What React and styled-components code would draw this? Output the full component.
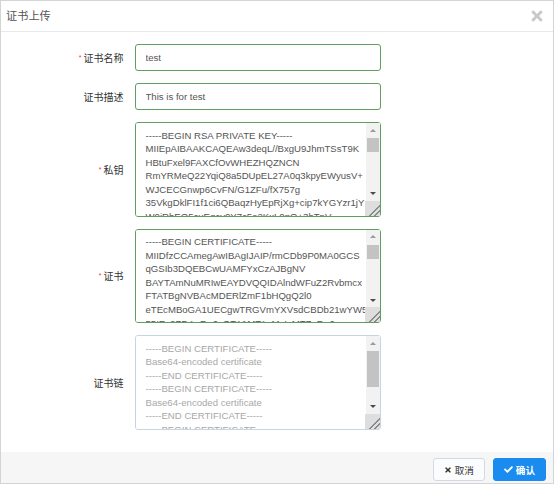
import styled, { createGlobalStyle } from 'styled-components'
import { FaTimes, FaCheck } from 'react-icons/fa'

const GlobalStyle = createGlobalStyle`
  html, body { margin: 0; padding: 0; background: #fff; }
  body { font-family: "Liberation Sans", Arial, "Noto Sans CJK SC", sans-serif; }
  * { box-sizing: border-box; }
`

const Dialog = styled.div`
  width: 554px;
  height: 484px;
  border: 1px solid #d4d4d4;
  display: flex;
  flex-direction: column;
  background: #fff;
`

const Header = styled.div`
  height: 31px;
  flex: none;
  border-bottom: 1px solid #e6e9f0;
  display: flex;
  align-items: center;
  justify-content: space-between;
  padding: 0 8px 2px 5px;
`

const Title = styled.div`
  font-family: "Noto Sans CJK SC", sans-serif;
  font-size: 11.2px;
  color: #555;
`

const Close = styled.span`
  display: flex;
  color: #c8c8c8;
  font-size: 16px;
  margin-top: 1px;
`

const Body = styled.div`
  flex: 1;
  padding-top: 12px;
`

const Row = styled.div`
  display: grid;
  grid-template-columns: 133.5px 246px;
  align-items: center;
  margin-bottom: 12px;
`

const Label = styled.label`
  text-align: right;
  padding-right: 11px;
  font-family: "Noto Sans CJK SC", sans-serif;
  font-size: 10px;
  color: #333;
`

const Star = styled.span`
  color: #e5403a;
  font-family: "Liberation Sans", sans-serif;
  font-size: 7px;
  margin-right: 2px;
  position: relative;
  top: -2px;
`

const Input = styled.input`
  height: 27px;
  width: 100%;
  border: 1px solid ${p => (p.$ok ? '#5f9e5f' : '#c8d4e0')};
  border-radius: 3px;
  padding: 0 10px;
  font-family: "Liberation Sans", Arial, sans-serif;
  font-size: 9.6px;
  color: #555;
  outline: none;
`

const AreaWrap = styled.div`
  position: relative;
`

const Area = styled.textarea`
  height: 94.5px;
  width: 100%;
  border: 1px solid ${p => (p.$ok ? '#5f9e5f' : '#c8d4e0')};
  border-radius: 3px;
  padding: 5.5px 10px;
  font-family: "Liberation Sans", Arial, sans-serif;
  font-size: 9.6px;
  line-height: 13.6px;
  color: ${p => (p.$muted ? '#a8a8a8' : '#555')};
  white-space: pre;
  overflow-x: hidden;
  overflow-y: scroll;
  outline: none;
  display: block;

  &::-webkit-resizer {
    background-color: #dedede;
    background-image: linear-gradient(135deg, transparent 0 62%, #8a8a8a 62% 67%, transparent 67% 80%, #8a8a8a 80% 85%, transparent 85%);
  }
`

/* drawn scrollbar, laid over the textarea's right edge */
const Scrollbar = styled.div`
  position: absolute;
  top: 1px;
  right: 1px;
  bottom: 16px;
  width: 14px;
  background: #f2f2f2;
  display: flex;
  flex-direction: column;
  pointer-events: none;
`

const ArrowBtn = styled.div`
  height: 14px;
  flex: none;
  display: flex;
  align-items: center;
  justify-content: center;

  &::before {
    content: '';
    border-left: 3px solid transparent;
    border-right: 3px solid transparent;
    ${p => (p.$down
      ? 'border-top: 3px solid #4a4a4a;'
      : 'border-bottom: 3px solid #9a9a9a;')}
  }
`

const Track = styled.div`
  flex: 1;
  padding: 0 1px;
`

const Thumb = styled.div`
  height: ${p => p.$size}px;
  margin-top: 1px;
  background: #c3c3c3;
`

const Footer = styled.div`
  height: 31px;
  flex: none;
  background: #f6f6f6;
  display: flex;
  justify-content: flex-end;
  align-items: flex-start;
  gap: 8px;
  padding: 6px 7px 0 0;
`

const Button = styled.button`
  height: 23px;
  display: flex;
  align-items: center;
  gap: 3px;
  padding: 0 10px;
  border-radius: 3px;
  border: 1px solid ${p => (p.$primary ? '#1a8cf0' : '#d3dae3')};
  background: ${p => (p.$primary ? '#1a8cf0' : '#fbfcfd')};
  color: ${p => (p.$primary ? '#fff' : '#333')};
  font-family: "Noto Sans CJK SC", sans-serif;
  font-size: 9.6px;
  font-weight: ${p => (p.$primary ? 700 : 400)};
  cursor: pointer;
  svg { font-size: ${p => (p.$primary ? '9px' : '8px')}; }
`

const privateKey = [
  '-----BEGIN RSA PRIVATE KEY-----',
  'MIIEpAIBAAKCAQEAw3deqL//BxgU9JhmTSsT9K',
  'HBtuFxel9FAXCfOvWHEZHQZNCN',
  'RmYRMeQ22YqiQ8a5DUpEL27A0q3kpyEWyusV+',
  'WJCECGnwp6CvFN/G1ZFu/fX757g',
  '35VkgDklFI1f1ci6QBaqzHyEpRjXg+cip7kYGYzr1jY',
  'W0iRbEQ5cuEgcy0Y7c5a2KxL0pQ+3hTnV',
  'c8XkFq2n0JtBvL7s4QxYw9ZpR1mHd6eA',
  'Kp3Uu0WlB8sZr2fTq6YhNcE5vMj7OaD1',
  'gH4kLs9Pe2QwRt/XyZ1uVb8nMc3Ji0Ao',
  'Tf6RkWq+Ys2Hp9LdG4vBn7Ux1Ce5Zm3E',
  'jN8aQr0Sk2Lh6Vt/Wp4Dy9Fb1Mx7Gc3K',
  'oP5uYi2Rn8Ht0Le6Sa4Zq9Xw1Vd3Bf7M',
  'Qs2Kc8Jh0Dn6Ym4Tp9Ga1Lx3Rb7We5Fu',
  'Uz4Ov2Nk8Ic0Hj6Pq4Ms9Ea1Ty3Wl7Dg',
  'Bi5Xf2Jo8Rm0Sd6Ku4Lc9Qn1Zh3Yp7Ve',
  'Ga2Tw8Lb0Mk6Hs4Jr9Cx1Py3Nf7Qd5Uo',
  'Ke4Ri2Ws8Dn0Vb6Zl4Gt9Oh1Mc3Xj7Ap',
  'Fy5Lm2Uq8Ek0Pi6Nr4Sd9Bw1Hx3Tc7Zo',
  'Jv4Ob2Ya8Gn0Rk6Ct4Ml9Ws1Ex3Pd7Lu',
  'Hq5Ni2Zf8Sb0Kj6Xo4Ar9Tv1Dm3Yc7Ge',
  'Wp2Mh8Cl0Ux6Es4Pn9Jd1Rb3Fk7Lt5Qz',
  'Oa4Vg2Ki8Ty0Nw6Hb4Sc9Zm1Lq3Xe7Dr',
  'Bs5Jf2Po8Gu0Mk6Rd4Yl9Cn1Wh3Ex7Ta',
  'Iz2Qv8Hc0Fp6Ob4Nj9Ks1Ug3Lr7Ym5Dw',
  'Ex4Tl2Sa8Jm0Cq6Zk4Vo9Hb1Pn3Rg7Fy',
  'Lc5Wu2Dr8Ys0Ni6Gf4Ot9Mx1Aj3Kp7Be',
  'Rq2Hv8Pk0Ua6Jb4Cw9Ll1Zs3Tn7Xd5Go',
  'Mf4Ye2Ni8Sx0Kc6Ot4Br9Dp1Ql3Vh7Ju',
  'Wa5Fm2Lj8Cg0Ry6Uk4Hs9Pb1Nd3Eo7Zt',
  '-----END RSA PRIVATE KEY-----',
].join('\n')

const certificate = [
  '-----BEGIN CERTIFICATE-----',
  'MIIDfzCCAmegAwIBAgIJAIP/rmCDb9P0MA0GCS',
  'qGSIb3DQEBCwUAMFYxCzAJBgNV',
  'BAYTAmNuMRIwEAYDVQQIDAlndWFuZ2Rvbmcx',
  'FTATBgNVBAcMDERlZmF1bHQgQ2l0',
  'eTEcMBoGA1UECgwTRGVmYXVsdCBDb21wYW55',
  '55IEx0ZDAeFw0xOTA1MTAxMzIxMTZaFw0y',
  'OTA1MDcxMzIxMTZaMFYxCzAJBgNVBAYT',
  'AmNuMRIwEAYDVQQIDAlndWFuZ2RvbmcxFTAT',
  'BgNVBAcMDERlZmF1bHQgQ2l0eTEcMBoG',
  'A1UECgwTRGVmYXVsdCBDb21wYW55IEx0ZDCC',
  'ASIwDQYJKoZIhvcNAQEBBQADggEPADCCAQoC',
  'ggEBAMN3XqjL/wcYFPSYZk0rE/SnhwbbhcXp',
  'fRRQlwnzr1hxGR0GTQ0ZmmETHkNtmKokPGuQ',
  '1KRC9uwNKt5KchFsrlfliQhAhp8KegrxTfxt',
  'WRbv13++YN+VZIA5JRSNX9XIukAWqsx8hKUY',
  'l4PnIqe5GBmM69Y1tIkWxEOXLhIHMtGO3Oa',
  'YnDXsPz+ITvQtNcD4Ysp5CqTf8Pz1kBvLqR',
  'Hn4ZxU9a2mKq7tWc0bFe3jLrV6oYs1dGp8N',
  'Xi5Tb2Mw8Qk0Hj6Rz4Ua9Lc1Pf3Vn7Eo5Gy',
  'Ks2Dx8Ai0Wl6Nb4Cq9Tm1Ye3Jh7Rp5Fu2Zo',
  'Pv4Gk2Sj8Hn0Ow6Ld4Ub9Xc1Mr3Qt7Ea5Iy',
  'Bf5Zq2Kw8Tn0Rl6Js4Yd9Cm1Vx3Hp7Ua2Go',
  'Ne2Li8Oh0Fs6Wb4Pk9Dq1Tc3Zy7Mx5Jr4Av',
  'Uk4Cg2Rb8Ym0Ex6Hl4Sn9Qj1Ip3Wd7Ft5Lo',
  '-----END CERTIFICATE-----',
].join('\n')

const chain = [
  '-----BEGIN CERTIFICATE-----',
  'Base64-encoded certificate',
  '-----END CERTIFICATE-----',
  '-----BEGIN CERTIFICATE-----',
  'Base64-encoded certificate',
  '-----END CERTIFICATE-----',
  '-----BEGIN CERTIFICATE-----',
  'Base64-encoded certificate',
  '-----END CERTIFICATE-----',
  '-----BEGIN CERTIFICATE-----',
  'Base64-encoded certificate',
  '-----END CERTIFICATE-----',
].join('\n')

const fields = [
  { label: '证书名称', required: true, kind: 'input', value: 'test', ok: true },
  { label: '证书描述', kind: 'input', value: 'This is for test', ok: true },
  { label: '私钥', required: true, kind: 'area', value: privateKey, ok: true, thumb: 14 },
  { label: '证书', required: true, kind: 'area', value: certificate, ok: true, thumb: 14 },
  { label: '证书链', kind: 'area', value: chain, muted: true, thumb: 36 },
]

const App = () => {
  return (
    <Dialog>
      <GlobalStyle />
      <Header>
        <Title>证书上传</Title>
        <Close><FaTimes /></Close>
      </Header>
      <Body>
        {fields.map((f) => (
          <Row key={f.label}>
            <Label>
              {f.required && <Star>*</Star>}
              {f.label}
            </Label>
            {f.kind === 'input' ? (
              <Input $ok={f.ok} defaultValue={f.value} />
            ) : (
              <AreaWrap>
                <Area $ok={f.ok} $muted={f.muted} defaultValue={f.value} spellCheck={false} />
                <Scrollbar>
                  <ArrowBtn />
                  <Track><Thumb $size={f.thumb} /></Track>
                  <ArrowBtn $down />
                </Scrollbar>
              </AreaWrap>
            )}
          </Row>
        ))}
      </Body>
      <Footer>
        <Button>
          <FaTimes /> 取消
        </Button>
        <Button $primary>
          <FaCheck /> 确认
        </Button>
      </Footer>
    </Dialog>
  )
}

export default App
